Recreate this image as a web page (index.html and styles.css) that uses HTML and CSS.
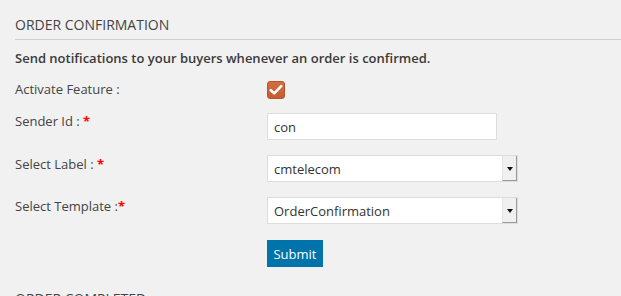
FILE: index.html
```html
<!DOCTYPE html>
<html>
<head>
<meta charset="utf-8">
<link rel="stylesheet" href="styles.css">
</head>
<body>
<div class="page">
  <h2 class="section-title">ORDER CONFIRMATION</h2>
  <p class="intro">Send notifications to your buyers whenever an order is confirmed.</p>
  <div class="form">
    <div class="row row-check">
      <label class="label">Activate Feature :</label>
      <span class="checkbox">
        <svg width="14" height="12" viewBox="0 0 14 12"><path d="M1.8 6.2 L5.2 9.4 L12.2 2.2" fill="none" stroke="#fff" stroke-width="2.6" stroke-linecap="round" stroke-linejoin="round"/></svg>
      </span>
    </div>
    <div class="row">
      <label class="label label-sender">Sender Id : <span class="req">*</span></label>
      <input class="text-input" type="text" value="con">
    </div>
    <div class="row">
      <label class="label">Select Label : <span class="req">*</span></label>
      <div class="select">
        <span class="select-value">cmtelecom</span>
        <span class="select-arrow"><span class="tri"></span></span>
      </div>
    </div>
    <div class="row">
      <label class="label">Select Template :<span class="req">*</span></label>
      <div class="select">
        <span class="select-value">OrderConfirmation</span>
        <span class="select-arrow"><span class="tri"></span></span>
      </div>
    </div>
    <div class="row row-submit">
      <span class="label"></span>
      <button class="submit" type="button">Submit</button>
    </div>
  </div>
  <h2 class="section-title section-next">ORDER COMPLETED</h2>
</div>
</body>
</html>
```

FILE: styles.css
```css
html, body {
  margin: 0;
  padding: 0;
  background: #f1f1f1;
  overflow: hidden;
}

.page {
  padding: 15px 0 0 15px;
  font-family: "Open Sans", "Liberation Sans", sans-serif;
  color: #444;
  font-size: 13px;
}

.section-title {
  margin: 0;
  font-size: 14px;
  font-weight: 400;
  line-height: 20px;
  color: #444;
  padding-bottom: 4px;
  border-bottom: 1px solid #d0d0d0;
}

.section-next {
  margin-top: 22px;
  border-bottom: none;
}

.intro {
  margin: 9px 0 0;
  font-weight: 600;
  line-height: 18px;
  color: #3a3a3a;
}

.form {
  margin-top: 13px;
}

.row {
  display: flex;
  align-items: flex-start;
  margin-bottom: 15px;
}

.row-check {
  margin-bottom: 14px;
}

.row-submit {
  margin-top: 16px;
}

.row:last-child {
  margin-bottom: 0;
}

.label {
  width: 252px;
  flex: none;
  line-height: 18px;
  margin-top: 0;
}

.label-sender {
  margin-top: -1px;
}

.req {
  color: #f00;
  font-weight: 700;
}

.checkbox {
  width: 18px;
  height: 18px;
  box-sizing: border-box;
  border-radius: 3px;
  background: linear-gradient(#d56e43, #c35c31);
  border: 1px solid #b5532a;
  display: flex;
  align-items: center;
  justify-content: center;
  margin-top: 1px;
}

.text-input {
  width: 230px;
  height: 27px;
  box-sizing: border-box;
  margin: 0;
  border: 1px solid #ddd;
  background: #fff;
  padding: 0 6px;
  font-family: "Open Sans", "Liberation Sans", sans-serif;
  font-size: 13px;
  color: #333;
  outline: none;
}

.select {
  width: 251px;
  height: 27px;
  box-sizing: border-box;
  border: 1px solid #ddd;
  background: #fff;
  display: flex;
  align-items: stretch;
}

.select-value {
  flex: 1;
  padding-left: 6px;
  line-height: 26px;
  color: #333;
}

.select-arrow {
  width: 15px;
  box-sizing: border-box;
  background: #f0f0f0;
  border-left: 1px solid #e3e3e3;
  border-right: 1px solid #9a9a9a;
  border-bottom: 1px solid #9a9a9a;
  display: flex;
  align-items: center;
  justify-content: center;
}

.tri {
  width: 0;
  height: 0;
  border-left: 3px solid transparent;
  border-right: 3px solid transparent;
  border-top: 4px solid #111;
  margin-top: 1px;
}

.submit {
  width: 56px;
  height: 27px;
  margin: 0;
  border: none;
  background: #0073aa;
  color: #fff;
  font-family: "Open Sans", "Liberation Sans", sans-serif;
  font-size: 13px;
  padding: 0;
}
```
